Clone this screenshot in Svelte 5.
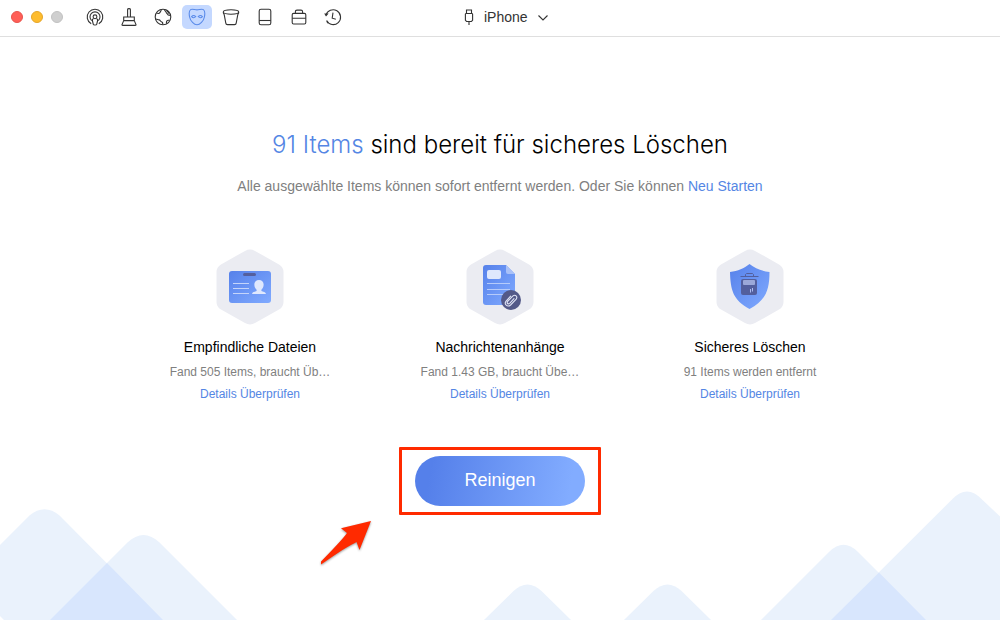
<script>
  const tools = ['airplay', 'brush', 'globe', 'mask', 'bucket', 'phone', 'case', 'history'];
  const labels = ['Verbindung', 'Bereinigen', 'Internet', 'Privatsphäre', 'Deinstallieren', 'Gerät', 'Werkzeuge', 'Verlauf'];

  const cards = [
    { icon: 'id', title: 'Empfindliche Dateien', info: 'Fand 505 Items, braucht Üb…' },
    { icon: 'doc', title: 'Nachrichtenanhänge', info: 'Fand 1.43 GB, braucht Übe…' },
    { icon: 'shield', title: 'Sicheres Löschen', info: '91 Items werden entfernt' },
  ];

  let active = $state('mask');
  let device = $state('iPhone');
</script>

<div class="page">
  <header>
    <div class="left">
      <div class="lights">
        <button class="light red" aria-label="Schließen"></button>
        <button class="light yellow" aria-label="Minimieren"></button>
        <button class="light gray" aria-label="Vergrößern" disabled></button>
      </div>
      <nav>
        {#each tools as tool, i}
          <button class="tool" class:active={active === tool} aria-label={labels[i]} onclick={() => (active = tool)}>
            <svg viewBox="0 0 18 18" width="18" height="18">
              {#if tool === 'airplay'}
                <path d="M5.2 15.8a7.8 7.8 0 1 1 7.6 0M5.7 12.6a5 5 0 1 1 6.6 0" />
                <circle cx="9" cy="8.8" r="1.9" />
                <path d="M7.5 10.4c-1.4.6-1.4 1.4-1 2.6l.8 3.4c.2.9 3.2.9 3.4 0l.8-3.4c.4-1.2.4-2-1-2.6" />
              {:else if tool === 'brush'}
                <path d="M7.6 9V1.5q0-.9 1.4-.9t1.4.9V9M3.7 9h10.6v3.6H3.7zM3.7 12.6 2 16.6q-.2.8.7.8h12.6q.9 0 .7-.8l-1.7-4" />
              {:else if tool === 'globe'}
                <circle cx="9" cy="9" r="7.8" />
                <path d="M2.6 4.8C4 6 5.6 5.500 6.100 4.200 6.500 3.200 7.300 3 7.300 1.500M10.600 1.400C10.300 3 11.800 3 12.200 4.300 12.500 5.500 13.500 5.400 13.800 6.500 14.200 7.600 15.300 6.800 16.500 7.400M12.600 2.200l2.600 3.400M1.400 11c1.500-.3 2.600 1 3.700.9 1.300 0 1 1.600 2.300 1.900 1.300.3 1.500 1.500 1.300 2.700M12.800 15.600c-.8-1.200-.4-1.800-.1-2.400.3-.8 1.800-.8 2.800-1.300" />
              {:else if tool === 'mask'}
                <path d="M2.6 1.6C4 .7 6.800 1.900 9 1.900S14 .7 15.4 1.6C16.7 2.500 17 6 16.4 9c-.7 4-4.600 7.700-7.400 7.700S2.300 13 1.600 9C1 6 1.300 2.500 2.600 1.600z" />
                <path d="M3.600 8.600q2-2.200 4.100.1-2.300 2-4.100-.1zM10.300 8.700q2.100-2.300 4.100-.1-1.800 2.100-4.100.1z" />
              {:else if tool === 'bucket'}
                <ellipse cx="9" cy="4" rx="7.7" ry="2.2" />
                <path d="M1.300 4.200c0 1.200.6 1.600.9 2.400l1.600 8.500c.1 1 .7 1.500 1.700 1.500h7c1 0 1.600-.5 1.700-1.500l1.600-8.500c.3-.8.9-1.200.9-2.400" />
              {:else if tool === 'phone'}
                <rect x="3.2" y="1.2" width="11.6" height="15.6" rx="1.8" />
                <path d="M3.2 12.5h11.6" />
              {:else if tool === 'case'}
                <rect x="2.2" y="5.4" width="13.6" height="10.6" rx="1.4" />
                <path d="M5.400 5.400V3.700q0-1.600 1.600-1.600h4q1.600 0 1.600 1.600v1.700M2.200 10.200h13.600" />
              {:else}
                <path d="M2 7.300a7.400 7.400 0 1 1 .6 5.300M2.700 13.400l1.400 1.800M9 4.600l-.8 5.600 3.600 1" />
                <path class="fill" d="M.2 5.500h4.400L2 8.600z" />
              {/if}
            </svg>
          </button>
        {/each}
      </nav>
    </div>
    <div class="device">
      <svg viewBox="0 0 12 18" width="12" height="18">
        <path d="M3.500 5.500V2h5v3.500M3 5.500h6q.6 0 .6.600v6.200L8.400 13.500H3.600l-1.200-1.200V6.100Q2.400 5.500 3 5.500zM6 13.500v3.500" />
      </svg>
      <select aria-label="Gerät" bind:value={device}>
        <option>iPhone</option>
      </select>
      <svg viewBox="0 0 12 8" width="12" height="8">
        <path d="M1.500 2.500 6 7 10.500 2.500" />
      </svg>
    </div>
  </header>

  <main>
    <h1><span>91 Items</span> sind bereit für sicheres Löschen</h1>
    <p class="sub">Alle ausgewählte Items können sofort entfernt werden. Oder Sie können <a href="#restart">Neu Starten</a></p>

    <div class="cards">
      {#each cards as card}
        <section class="card">
          <svg class="hex" viewBox="0 0 68 76" width="68" height="76">
            <defs>
              <linearGradient id="blue-{card.icon}" x1="0" y1="0" x2="1" y2="1">
                <stop offset="0" stop-color="#5681ea" />
                <stop offset="1" stop-color="#80aaff" />
              </linearGradient>
            </defs>
            <path fill="#ebecf2" d="M29 1.900Q34-1 39 1.900L63 15.400Q67.500 18 67.500 23V53Q67.500 58 63 60.600L39 74.100Q34 77 29 74.100L5 60.600Q.5 58 .5 53V23Q.5 18 5 15.400z" />
            {#if card.icon === 'id'}
              <rect x="13" y="22" width="42" height="32" rx="3" fill="url(#blue-id)" />
              <rect x="27" y="24" width="13" height="3" rx="1.500" fill="#545f9e" />
              <path stroke="#c5d5fa" d="M17 34.500h16M17 39.500h16M17 44.500h16" />
              <path fill="#dfe8fd" d="M43 31c3 0 5 2.200 4.600 5.200-.1 2-1.400 3.800-2.200 4.600v1.200c1.600 1 4.200.8 4.600 3H36c.4-2.200 3-2 4.600-3v-1.200c-.8-.8-2.100-2.600-2.200-4.600C38 33.200 40 31 43 31z" />
            {:else if card.icon === 'doc'}
              <path fill="url(#blue-doc)" d="M20 16h20l9 9v28q0 3-3 3H20q-3 0-3-3V19q0-3 3-3z" />
              <path fill="#a9c1f8" d="M40 16l9 9h-7q-2 0-2-2z" />
              <rect x="21" y="21" width="14" height="9" rx="2" fill="#dfe8fd" />
              <path stroke="#b6cbfa" d="M21 34.500h23M21 40.500h23M21 45.500h16" />
              <circle cx="45" cy="51" r="10" fill="#535988" />
              <path fill="none" stroke="#dfe3f5" stroke-width="1.100" stroke-linecap="round" d="M48 49.600l-4.300 4.700q-1.200 1-2.100.2t.1-2.100l5-5.300q2-1.600 3.400-.3t.1 3.300L44.600 56q-2.500 2-4.400.2t-.1-4.100l4.500-4.900" />
            {:else}
              <path fill="url(#blue-shield)" d="M33.500 15c5.500 4.500 12 7 20 8 0 18-3.500 28-20 37-16.500-9-19-19-19.500-37 8-1 14-3.500 19.500-8z" />
              <path fill="none" stroke="#535f9d" d="M29.500 27.500v-2l1-1h6l1 1v2M24.500 27.500h18" />
              <rect x="25" y="30" width="16" height="16" rx="2" fill="#535f9d" />
              <rect x="27" y="31" width="12" height="5" rx="1" fill="#9ba8d8" />
              <path stroke="#aebcf0" d="M34.500 43.500V40M36.500 42.500V39" />
            {/if}
          </svg>
          <h2>{card.title}</h2>
          <p>{card.info}</p>
          <a href="#details">Details Überprüfen</a>
        </section>
      {/each}
    </div>

    <div class="action">
      <button class="clean">Reinigen</button>
      <svg class="arrow" viewBox="0 0 56 52" width="56" height="52">
        <path fill="#ff2a00" d="M52 2 22 9.300 28 14Q24 20 2 42.500V45.500Q30 26 35 24.500L37.500 23 40.500 31z" />
      </svg>
    </div>
  </main>

  <svg class="hills" viewBox="0 0 1000 140">
    <g class="light-hill">
      <path d="M0 65 29.500 35.500Q44.500 23 59.500 35.500L163 140H4L0 136z" />
      <path d="M50 140 127.500 62.500Q143.500 47.500 159.500 62.500L237 140z" />
      <path d="M484 140 513.500 111Q527.500 98 541.500 111L571 140z" />
      <path d="M624 140 653.500 111Q667.500 98 681.500 111L711 140z" />
      <path d="M761 140 829.500 71.500Q843.500 58 857.500 71.500L926 140z" />
      <path d="M831 140 952 19.500Q967 3.500 982 19.500L1000 36.500V140z" />
    </g>
    <path class="overlap" d="M50 140 107 83 163 140zM831 140 879 92.500 926 140z" />
  </svg>
</div>

<style>
  :global(body) {
    background: #fff;
  }

  .page {
    position: relative;
    display: flex;
    flex-direction: column;
    min-height: 100vh;
    overflow: hidden;
    font-family: "Liberation Sans", Arial, sans-serif;
    color: #000;
  }

  button {
    padding: 0;
    border: none;
    font-family: inherit;
  }

  a {
    color: #5486e4;
    text-decoration: none;
  }

  header {
    display: grid;
    grid-template-columns: 1fr auto 1fr;
    align-items: center;
    height: 34px;
    padding-bottom: 2px;
    border-bottom: 1px solid #dfdfdf;
  }

  .left {
    display: flex;
    align-items: center;
    gap: 17px;
    padding-left: 11px;
  }

  .lights {
    display: flex;
    gap: 8px;
  }

  .light {
    box-sizing: border-box;
    width: 12px;
    height: 12px;
    border-radius: 50%;
  }

  .red {
    background: #ff5f57;
    border: 1px solid #e8544d;
  }

  .yellow {
    background: #febc2e;
    border: 1px solid #e5a62a;
  }

  .gray {
    background: #cfcfcf;
    border: 1px solid #c2c2c2;
  }

  nav {
    display: flex;
    gap: 4px;
  }

  .tool {
    display: flex;
    align-items: center;
    justify-content: center;
    width: 30px;
    height: 24px;
    border-radius: 5px;
    background: none;
    color: #333;
  }

  .tool.active {
    background: #c4d8ff;
    color: #5a8bea;
  }

  .tool svg,
  .device svg {
    fill: none;
    stroke: currentColor;
    stroke-width: 1.1;
  }

  .tool .fill {
    fill: currentColor;
    stroke: none;
  }

  .device {
    display: flex;
    align-items: center;
    gap: 9px;
    padding-left: 12px;
    color: #333;
  }

  select {
    appearance: none;
    padding: 0;
    border: none;
    background: none;
    font-family: inherit;
    font-size: 14px;
    color: #333;
  }

  main {
    display: flex;
    flex-direction: column;
    align-items: center;
    padding: 92px 16px 104px;
    text-align: center;
    position: relative;
    z-index: 1;
  }

  h1 {
    margin: 0;
    font-family: Inter, "Liberation Sans", sans-serif;
    font-size: 24px;
    font-weight: 300;
    line-height: 32px;
  }

  h1 span {
    color: #5486e4;
  }

  .sub {
    margin: 15px 0 0;
    font-size: 14px;
    line-height: 20px;
    color: #808080;
  }

  .cards {
    display: grid;
    grid-template-columns: repeat(3, 250px);
    justify-content: center;
    margin-top: 53px;
  }

  .card {
    display: flex;
    flex-direction: column;
    align-items: center;
    font-size: 12px;
    line-height: 22px;
  }

  h2 {
    margin: 11px 0 3px;
    font-size: 14px;
    font-weight: 400;
    line-height: 22px;
  }

  .card p {
    margin: 0;
    color: #808080;
  }

  .action {
    position: relative;
    margin-top: 42px;
    padding: 6px 13px;
    border: 3px solid #ff2a00;
    border-radius: 1px;
  }

  .clean {
    display: block;
    width: 170px;
    height: 50px;
    padding-bottom: 2px;
    border-radius: 25px;
    background: linear-gradient(100deg, #5580ea 10%, #82acff 90%);
    font-size: 18px;
    color: #fff;
  }

  .arrow {
    position: absolute;
    top: 69px;
    left: -83px;
    filter: drop-shadow(0 1px 1px rgba(0, 0, 0, 0.4));
  }

  .hills {
    position: absolute;
    bottom: 0;
    left: 0;
    width: 100%;
  }

  .light-hill {
    fill: #eaf2fc;
  }

  .overlap {
    fill: #d8e6fd;
  }
</style>
